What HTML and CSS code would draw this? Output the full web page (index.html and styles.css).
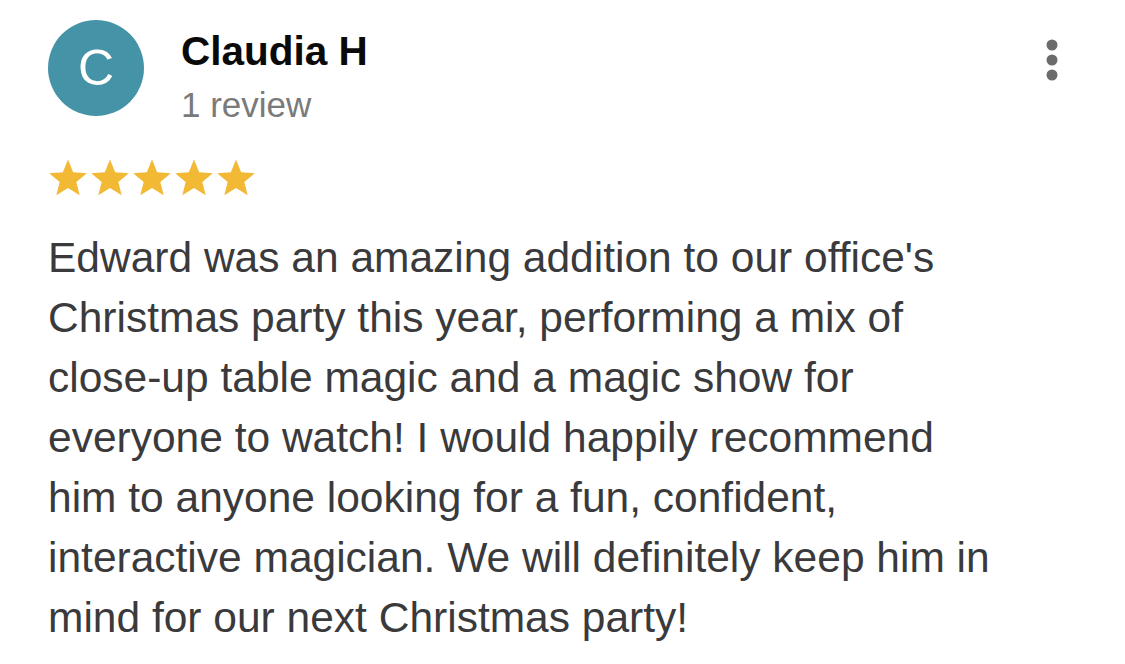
FILE: index.html
```html
<!DOCTYPE html>
<html>
<head>
<meta charset="utf-8">
<link rel="stylesheet" href="styles.css">
</head>
<body>
<div class="review">
  <div class="header">
    <div class="avatar">C</div>
    <div class="meta">
      <div class="name">Claudia H</div>
      <div class="count">1 review</div>
    </div>
    <div class="more">
      <svg width="14" height="42" viewBox="0 0 14 42"><circle cx="7" cy="6" r="5.5" fill="#6b6b6b"/><circle cx="7" cy="21" r="5.5" fill="#6b6b6b"/><circle cx="7" cy="36" r="5.5" fill="#6b6b6b"/></svg>
    </div>
  </div>
  <div class="stars">
    <svg class="star" viewBox="0 0 24 24"><path d="M12 1.5l3.1 7.6 8.2.6-6.3 5.3 2 8L12 18.6 4.999 23l2-8L.7 9.7l8.2-.6z" fill="#f2b935"/></svg>
    <svg class="star" viewBox="0 0 24 24"><path d="M12 1.5l3.1 7.6 8.2.6-6.3 5.3 2 8L12 18.6 4.999 23l2-8L.7 9.7l8.2-.6z" fill="#f2b935"/></svg>
    <svg class="star" viewBox="0 0 24 24"><path d="M12 1.5l3.1 7.6 8.2.6-6.3 5.3 2 8L12 18.6 4.999 23l2-8L.7 9.7l8.2-.6z" fill="#f2b935"/></svg>
    <svg class="star" viewBox="0 0 24 24"><path d="M12 1.5l3.1 7.6 8.2.6-6.3 5.3 2 8L12 18.6 4.999 23l2-8L.7 9.7l8.2-.6z" fill="#f2b935"/></svg>
    <svg class="star" viewBox="0 0 24 24"><path d="M12 1.5l3.1 7.6 8.2.6-6.3 5.3 2 8L12 18.6 4.999 23l2-8L.7 9.7l8.2-.6z" fill="#f2b935"/></svg>
  </div>
  <p class="text">Edward was an amazing addition to our office's<br>Christmas party this year, performing a mix of<br>close-up table magic and a magic show for<br>everyone to watch! I would happily recommend<br>him to anyone looking for a fun, confident,<br>interactive magician. We will definitely keep him in<br>mind for our next Christmas party!</p>
</div>
</body>
</html>
```

FILE: styles.css
```css
html, body {
  margin: 0;
  padding: 0;
  background: #ffffff;
}
body {
  font-family: "Liberation Sans", Arial, sans-serif;
  width: 1125px;
  height: 664px;
  overflow: hidden;
}
.review {
  padding: 20px 0 0 48px;
}
.header {
  display: flex;
  align-items: flex-start;
}
.avatar {
  width: 96px;
  height: 96px;
  border-radius: 50%;
  background: #4593a6;
  color: #fff;
  font-size: 50px;
  line-height: 96px;
  text-align: center;
  flex: none;
}
.meta {
  margin-left: 37px;
  padding-top: 9px;
}
.name {
  font-size: 40.5px;
  font-weight: bold;
  color: #0a0a0a;
  line-height: 44px;
}
.count {
  font-size: 35px;
  color: #7a7a7a;
  line-height: 40px;
  margin-top: 12px;
}
.more {
  margin-left: auto;
  margin-right: 66px;
  padding-top: 19px;
}
.stars {
  display: flex;
  gap: 2px;
  margin-top: 32px;
}
.star {
  width: 40px;
  height: 40px;
}
.text {
  margin: 31px 0 0;
  font-size: 42.5px;
  line-height: 60px;
  color: #3a3a3c;
}
```
